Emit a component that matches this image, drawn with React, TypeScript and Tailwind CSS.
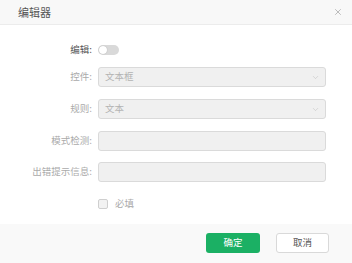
import { ChevronDown, X } from "lucide-react";

const font = { fontFamily: '"Noto Sans CJK SC", "Liberation Sans", sans-serif' };

function Label({ text, active }: { text: string; active?: boolean }) {
  return (
    <div
      className={`w-[92px] shrink-0 text-right text-[9.5px] leading-none ${
        active ? "text-[#555555]" : "text-[#aaaaaa]"
      }`}
    >
      {text}
    </div>
  );
}

function Field({ value, select }: { value?: string; select?: boolean }) {
  return (
    <div className="ml-[6px] flex h-[20px] w-[228px] items-center justify-between rounded-[3px] border border-[#dadada] bg-[#f0f0f0] pl-[6px] pr-[5px]">
      <span className="text-[9.5px] leading-none text-[#b3b3b3]">{value}</span>
      {select && <ChevronDown size={9} strokeWidth={1.3} className="text-[#bbbbbb]" />}
    </div>
  );
}

export default function App() {
  return (
    <div className="flex h-[263px] w-[352px] flex-col bg-white" style={font}>
      {/* Header */}
      <div className="flex h-[25px] shrink-0 items-center justify-between border-b border-[#ececec] bg-[#f8f8f8] pl-[18px] pr-[9px]">
        <span className="text-[11px] leading-none text-[#555555]">编辑器</span>
        <X size={10} strokeWidth={1.3} className="text-[#888888]" />
      </div>

      {/* Body */}
      <div className="flex flex-col pt-[15px]">
        <div className="flex h-[19px] items-center">
          <Label text="编辑:" active />
          <div className="ml-[6px] flex h-[10px] w-[21px] items-center rounded-full bg-[#d9d9d9] p-[1px]">
            <div className="h-[8px] w-[8px] rounded-full bg-white shadow-[0_0_1px_rgba(0,0,0,0.3)]" />
          </div>
        </div>

        <div className="mt-[8px] flex items-center">
          <Label text="控件:" />
          <Field value="文本框" select />
        </div>
        <div className="mt-[12px] flex items-center">
          <Label text="规则:" />
          <Field value="文本" select />
        </div>
        <div className="mt-[12px] flex items-center">
          <Label text="模式检测:" />
          <Field />
        </div>
        <div className="mt-[11px] flex items-center">
          <Label text="出错提示信息:" />
          <Field />
        </div>

        <div className="mt-[12px] flex h-[20px] items-center pl-[98px]">
          <div className="h-[10px] w-[10px] rounded-[2px] border border-[#cfcfcf] bg-[#f2f2f2]" />
          <span className="ml-[7px] text-[9.5px] leading-none text-[#aaaaaa]">必填</span>
        </div>
      </div>

      {/* Footer */}
      <div className="mt-auto flex h-[39px] items-center justify-end gap-[16px] bg-[#f9f9f9] pr-[23px] pb-[1px]">
        <button className="flex h-[20px] w-[54px] items-center justify-center rounded-[3px] bg-[#1bb064] text-[9.5px] leading-none text-white">
          确定
        </button>
        <button className="flex h-[20px] w-[53px] items-center justify-center rounded-[3px] border border-[#d9d9d9] bg-white text-[9.5px] leading-none text-[#555555]">
          取消
        </button>
      </div>
    </div>
  );
}
